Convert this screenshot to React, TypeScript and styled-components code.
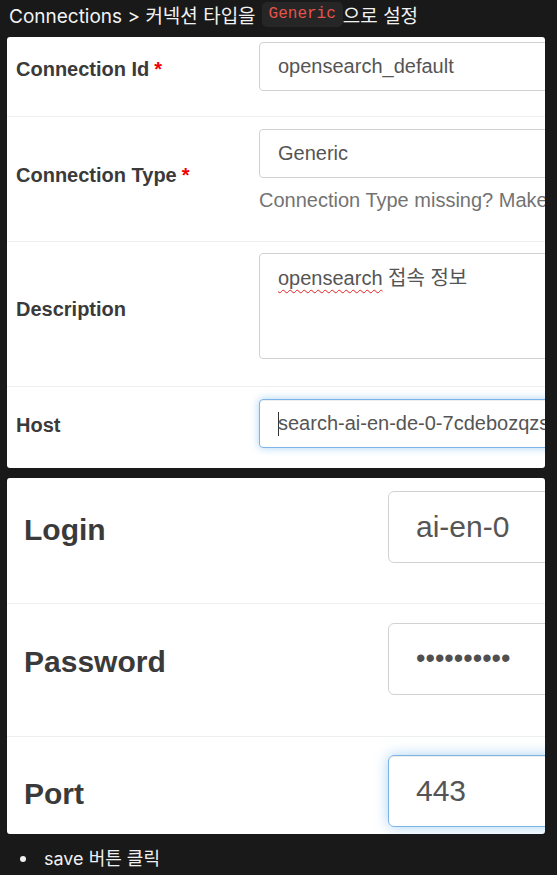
import React from "react";
import styled, { createGlobalStyle, css } from "styled-components";

const Global = createGlobalStyle`
  html, body { margin: 0; padding: 0; background: #191919; }
  body { font-family: "Inter", "Noto Sans CJK KR", sans-serif; }
`;

type Size = "sm" | "lg";

const sizes = {
  sm: { font: 20, h: 49, padX: 18, radius: 4, labelPad: 9, col: 252 },
  lg: { font: 30, h: 72, padX: 27, radius: 6, labelPad: 17, col: 381 },
};

const Page = styled.div`
  padding: 0 12px 0 7px;
  width: 557px;
  box-sizing: border-box;
`;

const Title = styled.div`
  height: 28px;
  display: flex;
  align-items: center;
  padding-left: 2px;
  color: #f2f2f2;
  font-size: 19px;
  white-space: nowrap;
  margin-bottom: 9px;
`;

const Code = styled.code`
  font-family: "Liberation Mono", "DejaVu Sans Mono", monospace;
  font-size: 16px;
  line-height: 17px;
  color: #e5534b;
  background: #262626;
  border-radius: 5px;
  padding: 4px 7px;
  margin: 0 0 0 6px;
`;

const Card = styled.div`
  background: #fff;
  border-radius: 3px;
  overflow: hidden;
  font-family: "Liberation Sans", Arial, "Noto Sans CJK KR", sans-serif;
  & + & { margin-top: 10px; }
`;

const Row = styled.div<{ $size: Size; $pt: number; $pb: number }>`
  display: grid;
  grid-template-columns: ${(p) => sizes[p.$size].col}px 1fr;
  align-items: center;
  padding: ${(p) => p.$pt}px 0 ${(p) => p.$pb}px;
  & + & { border-top: 1px solid #efefef; }
`;

const Label = styled.div<{ $size: Size; $dy?: number }>`
  padding-left: ${(p) => sizes[p.$size].labelPad}px;
  padding-top: ${(p) => p.$dy ?? 5}px;
  font-weight: 700;
  font-size: ${(p) => sizes[p.$size].font}px;
  color: #3a3a3a;
  white-space: nowrap;
`;

const Req = styled.span`
  color: #e00;
  margin-left: 5px;
`;

const Field = styled.div`
  min-width: 0;
`;

const Input = styled.div<{ $size: Size; $focus?: boolean; $tall?: number }>`
  box-sizing: border-box;
  width: 420px;
  height: ${(p) => p.$tall ?? sizes[p.$size].h}px;
  padding: 0 ${(p) => sizes[p.$size].padX}px;
  border: 1px solid #d2d2d2;
  border-radius: ${(p) => sizes[p.$size].radius}px;
  font-size: ${(p) => sizes[p.$size].font}px;
  color: #555;
  display: flex;
  align-items: ${(p) => (p.$tall ? "flex-start" : "center")};
  white-space: nowrap;
  overflow: hidden;
  ${(p) =>
    p.$tall &&
    css`
      padding-top: 12px;
      line-height: 24px;
    `}
  ${(p) =>
    p.$focus &&
    css`
      border-color: #7db4e6;
      box-shadow: inset 0 1px 1px rgba(0, 0, 0, 0.075),
        0 0 ${p.$size === "lg" ? 14 : 8}px rgba(102, 175, 233, 0.55);
    `}
`;

const Help = styled.div`
  margin-top: 10px;
  font-size: 20px;
  line-height: 24px;
  color: #737373;
  white-space: nowrap;
`;

const Misspelled = styled.span`
  text-decoration: underline wavy #e02020;
  text-decoration-thickness: 1px;
  text-underline-offset: 4px;
`;

const Caret = styled.span`
  display: inline-block;
  width: 1px;
  height: 24px;
  background: #333;
  margin-right: -1px;
`;

const Dots = styled.span`
  font-size: 27px;
  color: #505050;
  position: relative;
  top: -1px;
`;

const List = styled.ul`
  list-style: none;
  margin: 12px 0 0;
  padding-left: 37px;
  color: #f0f0f0;
  font-size: 18px;
  line-height: 26px;
`;

const Item = styled.li`
  position: relative;
  &::before {
    content: "";
    position: absolute;
    left: -24px;
    top: 10px;
    width: 6px;
    height: 6px;
    border-radius: 50%;
    background: #f0f0f0;
  }
`;

export default function App() {
  return (
    <Page>
      <Global />
      <Title>
        Connections &gt; 커넥션 타입을<Code>Generic</Code>으로 설정
      </Title>

      <Card>
        <Row $size="sm" $pt={5} $pb={25}>
          <Label $size="sm">
            Connection Id<Req>*</Req>
          </Label>
          <Field>
            <Input $size="sm">opensearch_default</Input>
          </Field>
        </Row>
        <Row $size="sm" $pt={12} $pb={29}>
          <Label $size="sm" $dy={10}>
            Connection Type<Req>*</Req>
          </Label>
          <Field>
            <Input $size="sm">Generic</Input>
            <Help>Connection Type missing? Make sure you've installed the corresponding provider package.</Help>
          </Field>
        </Row>
        <Row $size="sm" $pt={11} $pb={27}>
          <Label $size="sm" $dy={7}>Description</Label>
          <Field>
            <Input $size="sm" $tall={106}>
              <span>
                <Misspelled>opensearch</Misspelled> 접속 정보
              </span>
            </Input>
          </Field>
        </Row>
        <Row $size="sm" $pt={12} $pb={20}>
          <Label $size="sm" $dy={4}>Host</Label>
          <Field>
            <Input $size="sm" $focus>
              <Caret />
              search-ai-en-de-0-7cdebozqzs
            </Input>
          </Field>
        </Row>
      </Card>

      <Card>
        <Row $size="lg" $pt={13} $pb={40}>
          <Label $size="lg" $dy={6}>Login</Label>
          <Field>
            <Input $size="lg">ai-en-0</Input>
          </Field>
        </Row>
        <Row $size="lg" $pt={19} $pb={41}>
          <Label $size="lg" $dy={6}>Password</Label>
          <Field>
            <Input $size="lg">
              <Dots>••••••••••</Dots>
            </Input>
          </Field>
        </Row>
        <Row $size="lg" $pt={18} $pb={7}>
          <Label $size="lg" $dy={5}>Port</Label>
          <Field>
            <Input $size="lg" $focus>443</Input>
          </Field>
        </Row>
      </Card>

      <List>
        <Item>save 버튼 클릭</Item>
      </List>
    </Page>
  );
}
